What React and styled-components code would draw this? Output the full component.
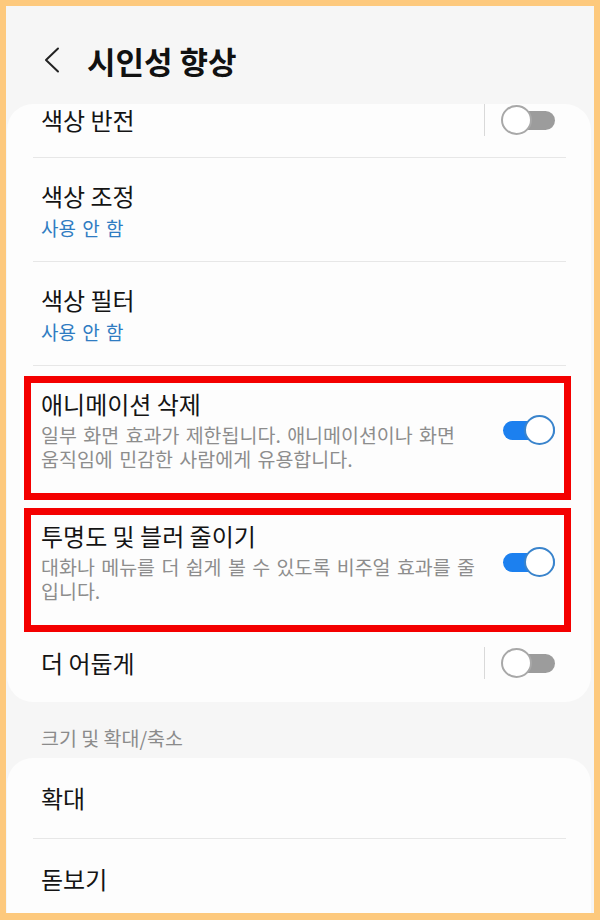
import styled, { createGlobalStyle } from 'styled-components';

const GlobalStyle = createGlobalStyle`
  body {
    margin: 0;
    font-family: "Noto Sans CJK KR", "Noto Sans", sans-serif;
  }
`;

const Frame = styled.div`
  box-sizing: border-box;
  width: 600px;
  height: 920px;
  border: 6px solid #fdc97d;
  border-bottom-width: 7px;
  background: #f6f6f6;
  overflow: hidden;
  display: flex;
  flex-direction: column;
`;

const Header = styled.header`
  box-sizing: border-box;
  height: 98px;
  padding: 10px 0 0 38px;
  display: flex;
  align-items: center;
  gap: 27px;
  flex-shrink: 0;
`;

const Title = styled.h1`
  margin: 0;
  font-size: 31px;
  font-weight: 700;
  color: #111;
  line-height: 1;
`;

const Card = styled.section`
  background: #fdfdfd;
  border-radius: 26px;
  overflow: hidden;
  margin: 0 3px 0 1px;
  flex-shrink: 0;
  padding-bottom: ${(p) => p.$bottom || 0}px;
`;

const Row = styled.div`
  display: flex;
  align-items: center;
  box-sizing: border-box;
  min-height: ${(p) => p.$h || 0}px;
  padding: ${(p) => p.$pad || '0 36px 0 34px'};
  margin-top: ${(p) => p.$shift || 0}px;
`;

const Texts = styled.div`
  flex: 1;
  display: flex;
  flex-direction: column;
  gap: ${(p) => p.$gap || 4}px;
`;

const Label = styled.div`
  font-size: 24px;
  line-height: 30px;
  color: #141414;
  white-space: nowrap;
`;

const Sub = styled.div`
  font-size: 19px;
  line-height: 26px;
  color: #2f7cc2;
  word-spacing: 2px;
`;

const Desc = styled.div`
  font-size: 19.5px;
  line-height: 24px;
  color: #8d8d8d;
  word-spacing: 2px;
  white-space: nowrap;
`;

const Divider = styled.hr`
  margin: 0 25px 0 26px;
  border: none;
  height: 1px;
  background: #e7e7e7;
`;

const Highlight = styled.div`
  margin: ${(p) => p.$top}px 20px 0 17px;
  border: 7px solid #f40000;
`;

const VLine = styled.span`
  width: 1px;
  height: 32px;
  background: #d9d9d9;
  margin-right: 16px;
`;

const Switch = styled.span`
  position: relative;
  width: 54px;
  height: 30px;
  flex-shrink: 0;
`;

const Track = styled.span`
  position: absolute;
  top: 6px;
  bottom: 5px;
  left: ${(p) => (p.$on ? 2 : 4)}px;
  right: 0;
  border-radius: 10px;
  background: ${(p) => (p.$on ? '#1c80ef' : '#9c9c9c')};
`;

const Thumb = styled.span`
  position: absolute;
  top: 0;
  ${(p) => (p.$on ? 'right: 0;' : 'left: 0;')}
  box-sizing: border-box;
  width: 31px;
  height: 30px;
  border-radius: 50%;
  background: #fff;
  border: 2px solid ${(p) => (p.$on ? '#3a84cc' : '#a8a8a8')};
`;

const SectionTitle = styled.div`
  padding: 24px 0 8px 35px;
  font-size: 19.5px;
  line-height: 24px;
  color: #8b8b8b;
  flex-shrink: 0;
`;

function Toggle({ on }) {
  return (
    <Switch>
      <Track $on={on} />
      <Thumb $on={on} />
    </Switch>
  );
}

function BackIcon() {
  return (
    <svg width="16" height="26" viewBox="0 0 16 26">
      <polyline points="14,1.5 2,13 14,24.5" fill="none" stroke="#222" strokeWidth="2" strokeLinejoin="round" strokeLinecap="round" />
    </svg>
  );
}

export default function App() {
  return (
    <Frame>
      <GlobalStyle />
      <Header>
        <BackIcon />
        <Title>시인성 향상</Title>
      </Header>

      <Card>
        <Row $h={75} $shift={-22}>
          <Texts>
            <Label>색상 반전</Label>
          </Texts>
          <VLine />
          <Toggle on={false} />
        </Row>
        <Divider />
        <Row $pad="23px 36px 20px 34px">
          <Texts>
            <Label>색상 조정</Label>
            <Sub>사용 안 함</Sub>
          </Texts>
        </Row>
        <Divider />
        <Row $pad="23px 36px 20px 34px">
          <Texts>
            <Label>색상 필터</Label>
            <Sub>사용 안 함</Sub>
          </Texts>
        </Row>
        <Divider />
        <Highlight $top={10}>
          <Row $pad="6px 9px 22px 10px">
            <Texts $gap={4}>
              <Label>애니메이션 삭제</Label>
              <Desc>
                일부 화면 효과가 제한됩니다. 애니메이션이나 화면
                <br />
                움직임에 민감한 사람에게 유용합니다.
              </Desc>
            </Texts>
            <Toggle on />
          </Row>
        </Highlight>
        <Highlight $top={8}>
          <Row $pad="6px 9px 22px 10px">
            <Texts $gap={4}>
              <Label>투명도 및 블러 줄이기</Label>
              <Desc>
                대화나 메뉴를 더 쉽게 볼 수 있도록 비주얼 효과를 줄
                <br />
                입니다.
              </Desc>
            </Texts>
            <Toggle on />
          </Row>
        </Highlight>
        <Row $h={70} $pad="0 36px 8px 34px">
          <Texts>
            <Label>더 어둡게</Label>
          </Texts>
          <VLine />
          <Toggle on={false} />
        </Row>
      </Card>

      <SectionTitle>크기 및 확대/축소</SectionTitle>

      <Card $bottom={40}>
        <Row $h={80}>
          <Texts>
            <Label>확대</Label>
          </Texts>
        </Row>
        <Divider />
        <Row $h={80}>
          <Texts>
            <Label>돋보기</Label>
          </Texts>
        </Row>
      </Card>
    </Frame>
  );
}
